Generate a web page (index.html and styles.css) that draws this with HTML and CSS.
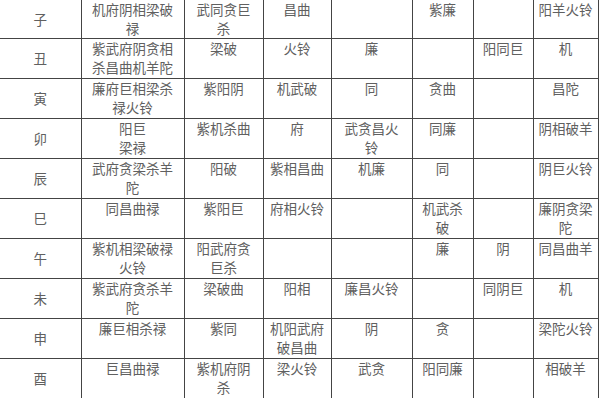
FILE: index.html
```html
<!DOCTYPE html>
<html lang="zh">
<head>
<meta charset="utf-8">
<link rel="stylesheet" href="styles.css">
</head>
<body>
<table class="chart">
<colgroup>
<col class="c1"><col class="c2"><col class="c3"><col class="c4"><col class="c5"><col class="c6"><col class="c7"><col class="c8">
</colgroup>
<tbody>
<tr><th>子</th><td>机府阴相梁破<br>禄</td><td>武同贪巨<br>杀</td><td>昌曲</td><td></td><td>紫廉</td><td></td><td>阳羊火铃</td></tr>
<tr><th>丑</th><td>紫武府阴贪相<br>杀昌曲机羊陀</td><td>梁破</td><td>火铃</td><td>廉</td><td></td><td>阳同巨</td><td>机</td></tr>
<tr><th>寅</th><td>廉府巨相梁杀<br>禄火铃</td><td>紫阳阴</td><td>机武破</td><td>同</td><td>贪曲</td><td></td><td>昌陀</td></tr>
<tr><th>卯</th><td>阳巨<br>梁禄</td><td>紫机杀曲</td><td>府</td><td>武贪昌火<br>铃</td><td>同廉</td><td></td><td>阴相破羊</td></tr>
<tr><th>辰</th><td>武府贪梁杀羊<br>陀</td><td>阳破</td><td>紫相昌曲</td><td>机廉</td><td>同</td><td></td><td>阴巨火铃</td></tr>
<tr><th>巳</th><td>同昌曲禄</td><td>紫阳巨</td><td>府相火铃</td><td></td><td>机武杀<br>破</td><td></td><td>廉阴贪梁<br>陀</td></tr>
<tr><th>午</th><td>紫机相梁破禄<br>火铃</td><td>阳武府贪<br>巨杀</td><td></td><td></td><td>廉</td><td>阴</td><td>同昌曲羊</td></tr>
<tr><th>未</th><td>紫武府贪杀羊<br>陀</td><td>梁破曲</td><td>阳相</td><td>廉昌火铃</td><td></td><td>同阴巨</td><td>机</td></tr>
<tr><th>申</th><td>廉巨相杀禄</td><td>紫同</td><td>机阳武府<br>破昌曲</td><td>阴</td><td>贪</td><td></td><td>梁陀火铃</td></tr>
<tr><th>酉</th><td>巨昌曲禄</td><td>紫机府阴<br>杀</td><td>梁火铃</td><td>武贪</td><td>阳同廉</td><td></td><td>相破羊</td></tr>
</tbody>
</table>
</body>
</html>
```
FILE: styles.css
```css
html, body {
  margin: 0;
  padding: 0;
  background: #fff;
}
.chart {
  border-collapse: collapse;
  table-layout: fixed;
  width: 598px;
  font-family: "Noto Sans CJK SC", sans-serif;
  font-size: 13.5px;
  line-height: 19px;
  color: #606060;
}
.c1 { width: 81px; }
.c2 { width: 103px; }
.c3 { width: 79px; }
.c4 { width: 68px; }
.c5 { width: 81px; }
.c6 { width: 61px; }
.c7 { width: 60px; }
.c8 { width: 65px; }
.chart th,
.chart td {
  border: 1px solid #444;
  padding: 0;
  height: 39px;
  text-align: center;
  white-space: nowrap;
  overflow: hidden;
  font-weight: 400;
}
.chart td { vertical-align: top; }
.chart th { vertical-align: middle; }
.chart tr:first-child th,
.chart tr:first-child td {
  border-top: none;
  height: 38px;
}
.chart tr:last-child th,
.chart tr:last-child td {
  border-bottom: none;
}
.chart th { border-left: none; }
```
